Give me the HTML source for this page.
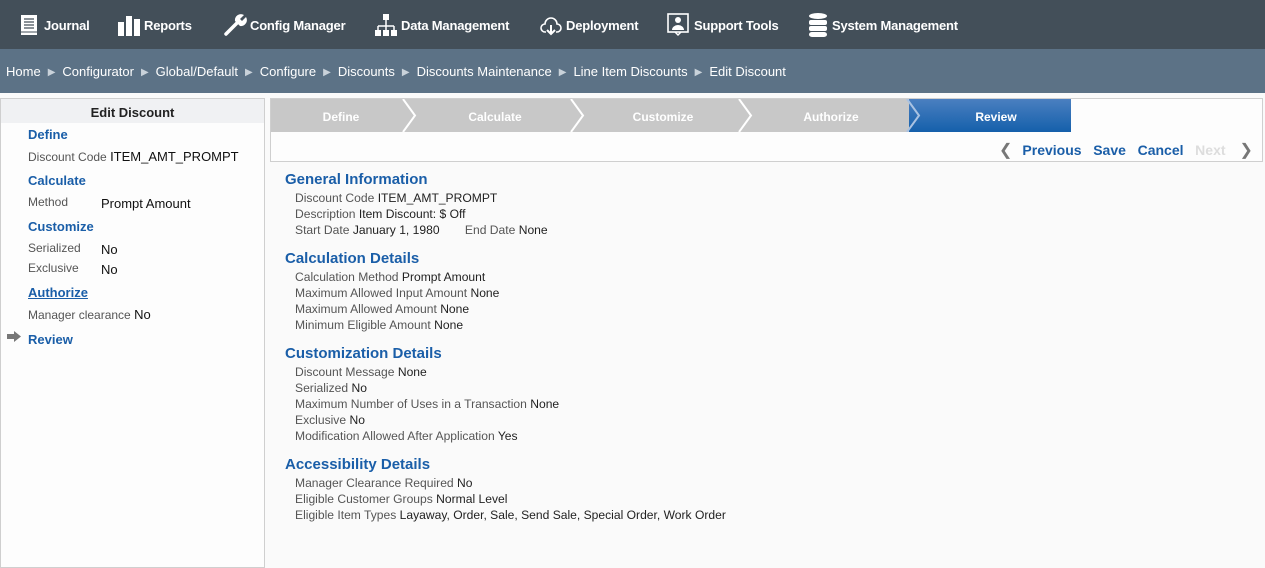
<!DOCTYPE html>
<html><head><style>
*{margin:0;padding:0;box-sizing:border-box}
body{width:1265px;height:557px;overflow:hidden;background:#fafafa;font-family:"Liberation Sans",Arial,sans-serif;font-size:12px;color:#222;position:relative}
.nav{position:absolute;left:0;top:0;width:1265px;height:49px;background:#434f59;color:#fff;font-weight:bold;font-size:13px}
.nav .it{position:absolute;top:18px;letter-spacing:-0.2px}
.nav svg{position:absolute}
.bc{position:absolute;left:0;top:49px;width:1265px;height:44px;background:#5c7286;color:#fff;font-size:13px;padding:15px 0 0 6px;white-space:nowrap}
.bc i{font-style:normal;color:#c9d2da;font-size:10px;margin:0 7px;position:relative;top:-1px}
.left{position:absolute;left:0;top:98px;width:265px;height:470px;border:1px solid #cfcfcf;background:#fdfdfd}
.left .hd{height:24px;background:#f0f1f3;text-align:center;font-weight:bold;font-size:13px;padding-top:6px}
.abs{position:absolute;white-space:nowrap}
.h{color:#1a5ea8;font-weight:bold;font-size:13px}
.lb{color:#555}
.v{color:#111}
.wiz{position:absolute;left:270px;top:98px;width:993px;height:64px;border:1px solid #cfcfcf;background:#fdfdfd}
.step{position:absolute;top:0;height:33px;background:#c8c8c8;color:#fff;font-weight:bold;font-size:12px;text-align:center;padding-top:11px}
.sec{color:#1a5ea8;font-weight:bold;font-size:15px}
.r{position:absolute;left:295px;white-space:nowrap;font-size:12.1px}
.r span{color:#555}
</style></head><body>
<div class="nav">
<svg style="left:20px;top:14px" width="18" height="22" viewBox="0 0 18 22"><rect x="1" y="1" width="16" height="20" fill="#fff"/><path d="M4 5h10M4 8h10M4 11h10M4 14h10" stroke="#434f59" stroke-width="1.3"/><path d="M1 18h16" stroke="#434f59"/></svg>
<div class="it" style="left:44px">Journal</div>
<svg style="left:118px;top:14px" width="22" height="22"><rect x="0" y="8" width="6" height="14" fill="#fff"/><rect x="8" y="2" width="6" height="20" fill="#fff"/><rect x="16" y="5" width="6" height="17" fill="#fff"/></svg>
<div class="it" style="left:144px">Reports</div>
<svg style="left:223px;top:13px" width="24" height="24" viewBox="0 0 24 24"><path d="M3 21L14 10" stroke="#fff" stroke-width="3.5" stroke-linecap="round"/><path d="M12 8a6 6 0 0 1 9-6l-4 4 2 2 4-4a6 6 0 0 1-6 9z" fill="#fff"/></svg>
<div class="it" style="left:250px">Config Manager</div>
<svg style="left:375px;top:14px" width="22" height="22"><rect x="8" y="0" width="6" height="6" fill="#fff"/><path d="M11 6v6M3 12h16M3 12v4M11 12v4M19 12v4" stroke="#fff" stroke-width="1.5" fill="none"/><rect x="0" y="16" width="6" height="6" fill="#fff"/><rect x="8" y="16" width="6" height="6" fill="#fff"/><rect x="16" y="16" width="6" height="6" fill="#fff"/></svg>
<div class="it" style="left:401px">Data Management</div>
<svg style="left:540px;top:14px" width="22" height="22"><path d="M6 18H5a4 4 0 0 1 0-8 6 6 0 0 1 12 0 4 4 0 0 1 0 8h-1" stroke="#fff" stroke-width="1.6" fill="none"/><path d="M11 11v8M7 16l4 4 4-4" stroke="#fff" stroke-width="2" fill="none"/></svg>
<div class="it" style="left:566px">Deployment</div>
<svg style="left:667px;top:13px" width="22" height="24"><rect x="1" y="1" width="20" height="18" stroke="#fff" stroke-width="1.6" fill="none"/><circle cx="11" cy="7" r="3" fill="#fff"/><path d="M5 17a6 5 0 0 1 12 0z" fill="#fff"/><path d="M8 19l3 3 3-3" stroke="#fff" stroke-width="1.5" fill="none"/></svg>
<div class="it" style="left:694px">Support Tools</div>
<svg style="left:808px;top:12px" width="20" height="26"><ellipse cx="10" cy="4" rx="9" ry="3" fill="#fff"/><rect x="1" y="8" width="18" height="5" rx="2" fill="#fff"/><rect x="1" y="14" width="18" height="5" rx="2" fill="#fff"/><rect x="1" y="20" width="18" height="5" rx="3" fill="#fff"/></svg>
<div class="it" style="left:832px">System Management</div>
</div>
<div class="bc">Home<i>▶</i>Configurator<i>▶</i>Global/Default<i>▶</i>Configure<i>▶</i>Discounts<i>▶</i>Discounts Maintenance<i>▶</i>Line Item Discounts<i>▶</i>Edit Discount</div>

<div class="left"><div class="hd">Edit Discount</div></div>
<div class="abs h" style="left:28px;top:127px">Define</div>
<div class="abs" style="left:28px;top:149px"><span class="lb">Discount Code</span> <span class="v" style="font-size:13px">ITEM_AMT_PROMPT</span></div>
<div class="abs h" style="left:28px;top:173px">Calculate</div>
<div class="abs lb" style="left:28px;top:195px">Method</div><div class="abs v" style="left:101px;top:196px;font-size:13px">Prompt Amount</div>
<div class="abs h" style="left:28px;top:219px">Customize</div>
<div class="abs lb" style="left:28px;top:241px">Serialized</div><div class="abs v" style="left:101px;top:242px;font-size:13px">No</div>
<div class="abs lb" style="left:28px;top:261px">Exclusive</div><div class="abs v" style="left:101px;top:262px;font-size:13px">No</div>
<div class="abs h" style="left:28px;top:285px;text-decoration:underline">Authorize</div>
<div class="abs" style="left:28px;top:307px"><span class="lb">Manager clearance</span> <span class="v" style="font-size:13px">No</span></div>
<svg style="position:absolute;left:7px;top:331px" width="14" height="11"><path d="M0 3h7V0l7 5.5-7 5.5V8H0z" fill="#777"/></svg>
<div class="abs h" style="left:28px;top:332px">Review</div>

<div class="wiz">
<div class="step" style="left:0;width:140px">Define</div>
<div class="step" style="left:140px;width:168px">Calculate</div>
<div class="step" style="left:308px;width:168px">Customize</div>
<div class="step" style="left:476px;width:168px">Authorize</div>
<div class="step" style="left:638px;width:162px;background:linear-gradient(#4a7fc0,#1560ab);padding-left:12px">Review</div>
<svg style="position:absolute;left:0;top:0" width="660" height="33"><g fill="none" stroke="#fff" stroke-width="2"><path d="M132 0l12 16.5L132 33M300 0l12 16.5L300 33M468 0l12 16.5L468 33"/><path d="M636 0l12 16.5L636 33" stroke="#a9c2e2"/></g></svg>
<div class="abs" style="left:728px;top:41px;font-size:14px;font-weight:bold;color:#1a5ea8"><span style="color:#777;font-weight:normal;font-size:16px;margin-right:10px">&#10094;</span>Previous&nbsp;&nbsp; Save&nbsp;&nbsp; Cancel&nbsp;&nbsp; <span style="color:#ddd">Next</span><span style="color:#777;font-weight:normal;font-size:16px;margin-left:14px">&#10095;</span></div>
</div>

<div class="abs sec" style="left:285px;top:171px">General Information</div>
<div class="r" style="top:191px"><span>Discount Code</span> ITEM_AMT_PROMPT</div>
<div class="r" style="top:207px"><span>Description</span> Item Discount: $ Off</div>
<div class="r" style="top:223px"><span>Start Date</span> January 1, 1980 <span style="margin-left:22px">End Date</span> None</div>
<div class="abs sec" style="left:285px;top:250px">Calculation Details</div>
<div class="r" style="top:270px"><span>Calculation Method</span> Prompt Amount</div>
<div class="r" style="top:286px"><span>Maximum Allowed Input Amount</span> None</div>
<div class="r" style="top:302px"><span>Maximum Allowed Amount</span> None</div>
<div class="r" style="top:318px"><span>Minimum Eligible Amount</span> None</div>
<div class="abs sec" style="left:285px;top:345px">Customization Details</div>
<div class="r" style="top:365px"><span>Discount Message</span> None</div>
<div class="r" style="top:381px"><span>Serialized</span> No</div>
<div class="r" style="top:397px"><span>Maximum Number of Uses in a Transaction</span> None</div>
<div class="r" style="top:413px"><span>Exclusive</span> No</div>
<div class="r" style="top:429px"><span>Modification Allowed After Application</span> Yes</div>
<div class="abs sec" style="left:285px;top:456px">Accessibility Details</div>
<div class="r" style="top:476px"><span>Manager Clearance Required</span> No</div>
<div class="r" style="top:492px"><span>Eligible Customer Groups</span> Normal Level</div>
<div class="r" style="top:508px"><span>Eligible Item Types</span> Layaway, Order, Sale, Send Sale, Special Order, Work Order</div>
</body></html>
